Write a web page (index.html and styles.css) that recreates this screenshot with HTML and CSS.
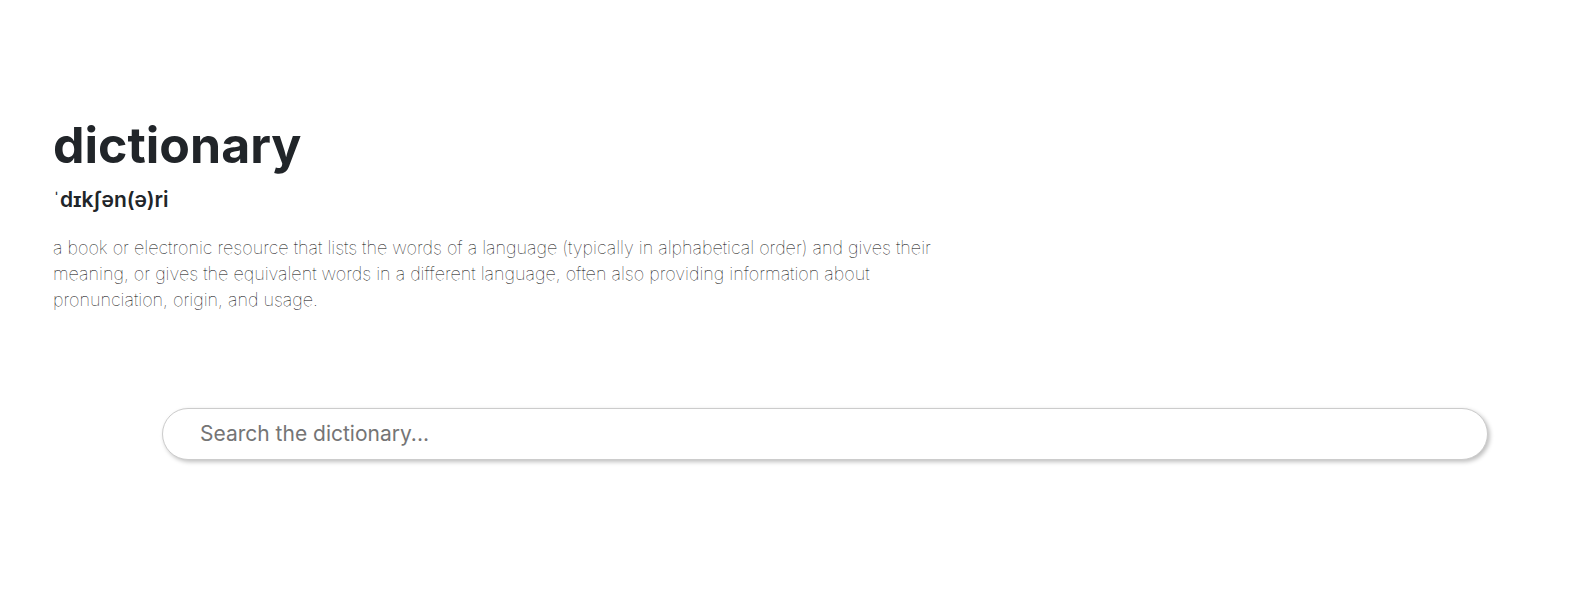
FILE: index.html
```html
<!DOCTYPE html>
<html lang="en">
<head>
  <meta charset="utf-8">
  <meta name="viewport" content="width=device-width, initial-scale=1">
  <title>Dictionary</title>
  <link rel="stylesheet" href="styles.css">
</head>
<body>
  <main class="page">
    <header class="intro">
      <h1 class="word">dictionary</h1>
      <h2 class="phonetic"><span class="stress">ˈ</span>dɪkʃən(ə)ri</h2>
      <p class="definition">a book or electronic resource that lists the words of a language (typically in alphabetical order) and gives their meaning, or gives the equivalent words in a different language, often also providing information about pronunciation, origin, and usage.</p>
    </header>
    <form class="search" role="search">
      <input class="search-input" type="search" placeholder="Search the dictionary..." aria-label="Search the dictionary">
    </form>
  </main>
</body>
</html>
```
FILE: styles.css
```css
* {
  box-sizing: border-box;
}

body {
  margin: 0;
  background: #fff;
  color: #212529;
  font-family: Inter, "Noto Sans", sans-serif;
}

.page {
  padding: 115px 52px 64px 53px;
}

.intro {
  max-width: 900px;
}

.word {
  margin: 0 0 9px;
  font-size: 50px;
  font-weight: 700;
  line-height: 60px;
}

.phonetic {
  margin: 0 0 19px;
  font-family: Inter, "Open Sans", sans-serif;
  font-size: 21px;
  font-weight: 600;
  line-height: 32px;
}

.stress {
  font-family: "Liberation Sans", sans-serif;
  font-weight: 400;
}

.definition {
  margin: 0;
  color: #000;
  font-size: 18px;
  font-weight: 100;
  line-height: 26px;
}

.search {
  margin: 95px 52px 0 109px;
}

.search-input {
  display: block;
  width: 100%;
  height: 52px;
  padding: 0 37px 2px;
  border: 1px solid #ccc;
  border-radius: 26px;
  background: #fff;
  box-shadow: 2px 2px 4px rgba(0, 0, 0, 0.25);
  color: #212529;
  font-family: Inter, sans-serif;
  font-size: 21px;
  appearance: none;
}

.search-input::placeholder {
  color: #757575;
  opacity: 1;
}
```
